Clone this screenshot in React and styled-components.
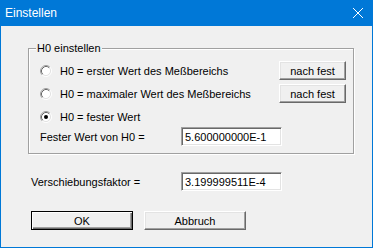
import React from 'react';
import styled, { createGlobalStyle } from 'styled-components';

const Global = createGlobalStyle`
  html, body { margin: 0; padding: 0; background: #ffffff; }
  body { font-family: "Liberation Sans", Arial, sans-serif; font-size: 11px; color: #000; }
  * { box-sizing: border-box; }
`;

const Window = styled.div`
  width: 373px;
  height: 248px;
  background: #f0f0f0;
  border: 1px solid #0078d7;
  border-top: none;
  display: flex;
  flex-direction: column;
`;

const TitleBar = styled.div`
  height: 26px;
  margin: 0 -1px;
  background: #0078d7;
  color: #ffffff;
  display: flex;
  align-items: center;
  justify-content: space-between;
  padding: 0 10px 0 5px;
  font-family: "Liberation Sans", Arial, sans-serif;
  font-size: 12px;
`;

const Body = styled.div`
  padding-top: 22px;
  display: flex;
  flex-direction: column;
  align-items: flex-start;
`;

const Group = styled.div`
  position: relative;
  margin-left: 27px;
  width: 326px;
  border: 1px solid #a0a0a0;
  box-shadow: inset 1px 1px 0 #ffffff, 1px 1px 0 #ffffff;
  padding: 12px 7px 7px 11px;
  display: flex;
  flex-direction: column;
`;

const Legend = styled.div`
  position: absolute;
  top: -7px;
  left: 7px;
  padding: 0 1px;
  line-height: 13px;
  background: #f0f0f0;
`;

const Row = styled.div`
  display: flex;
  align-items: center;
  height: 19px;
  margin-top: ${(p) => p.$gap ?? 0}px;
`;

const RadioLabel = styled.span`
  flex: 1;
  margin-left: 8px;
  white-space: nowrap;
`;

const Label = styled.span`
  width: ${(p) => p.$w}px;
  white-space: nowrap;
`;

const Button = styled.button`
  width: ${(p) => p.$w}px;
  height: 19px;
  padding: 0;
  margin: 0;
  font-family: "Liberation Sans", Arial, sans-serif;
  font-size: 11px;
  color: #000;
  background: #f0f0f0;
  border: 1px solid;
  border-color: #ffffff #696969 #696969 #ffffff;
  box-shadow: inset -1px -1px 0 #a0a0a0, inset 1px 1px 0 #e3e3e3;
  ${(p) =>
    p.$default &&
    `
    border-color: #000000;
    box-shadow: inset 1px 1px 0 #ffffff, inset -1px -1px 0 #696969, inset -2px -2px 0 #a0a0a0;
  `}
`;

const Edit = styled.div`
  width: 101px;
  height: 19px;
  background: #ffffff;
  border: 1px solid;
  border-color: #a0a0a0 #ffffff #ffffff #a0a0a0;
  box-shadow: inset 1px 1px 0 #696969, inset -1px -1px 0 #e3e3e3;
  padding: 0 0 0 3px;
  display: flex;
  align-items: center;
  white-space: nowrap;
`;

const FactorRow = styled(Row)`
  margin-left: 30px;
`;

const ButtonRow = styled.div`
  display: flex;
  gap: 11px;
  margin: 20px 0 0 30px;
`;

function Radio({ checked }) {
  return (
    <svg width="12" height="12" viewBox="0 0 12 12" style={{ flex: 'none' }}>
      <circle cx="6" cy="6" r="4.5" fill="#ffffff" />
      <path d="M2.11 9.89 A5.5 5.5 0 0 1 9.89 2.11" fill="none" stroke="#a0a0a0" strokeWidth="1" />
      <path d="M9.89 2.11 A5.5 5.5 0 0 1 2.11 9.89" fill="none" stroke="#ffffff" strokeWidth="1" />
      <path d="M2.82 9.18 A4.5 4.5 0 0 1 9.18 2.82" fill="none" stroke="#696969" strokeWidth="1" />
      <path d="M9.18 2.82 A4.5 4.5 0 0 1 2.82 9.18" fill="none" stroke="#e3e3e3" strokeWidth="1" />
      {checked && <circle cx="6" cy="6" r="2" fill="#000000" />}
    </svg>
  );
}

function CloseIcon() {
  return (
    <svg width="10" height="10" viewBox="0 0 10 10">
      <path d="M0 0 L10 10 M10 0 L0 10" stroke="#ffffff" strokeWidth="1" fill="none" />
    </svg>
  );
}

export default function App() {
  return (
    <>
      <Global />
      <Window>
        <TitleBar>
          <span>Einstellen</span>
          <CloseIcon />
        </TitleBar>
        <Body>
          <Group>
            <Legend>H0 einstellen</Legend>
            <Row>
              <Radio />
              <RadioLabel>H0 = erster Wert des Meßbereichs</RadioLabel>
              <Button $w={67}>nach fest</Button>
            </Row>
            <Row $gap={4}>
              <Radio />
              <RadioLabel>H0 = maximaler Wert des Meßbereichs</RadioLabel>
              <Button $w={67}>nach fest</Button>
            </Row>
            <Row $gap={4}>
              <Radio checked />
              <RadioLabel>H0 = fester Wert</RadioLabel>
            </Row>
            <Row $gap={1}>
              <Label $w={141}>Fester Wert von H0 =</Label>
              <Edit>5.600000000E-1</Edit>
            </Row>
          </Group>
          <FactorRow $gap={18}>
            <Label $w={150}>Verschiebungsfaktor =</Label>
            <Edit>3.199999511E-4</Edit>
          </FactorRow>
          <ButtonRow>
            <Button $w={102} $default>OK</Button>
            <Button $w={102}>Abbruch</Button>
          </ButtonRow>
        </Body>
      </Window>
    </>
  );
}
